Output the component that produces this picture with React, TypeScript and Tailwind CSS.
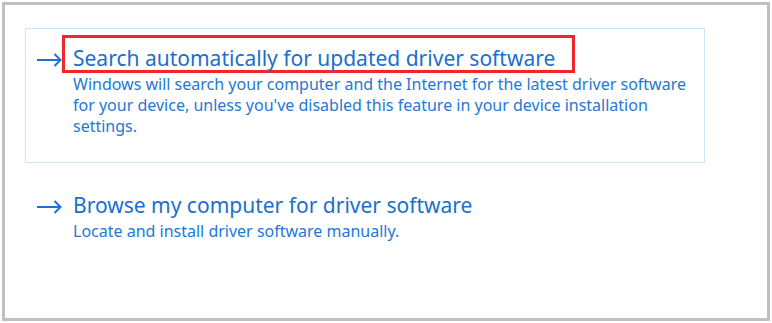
const options = [
  {
    title: 'Search automatically for updated driver software',
    desc: "Windows will search your computer and the Internet for the latest driver software for your device, unless you've disabled this feature in your device installation settings.",
    highlighted: true,
  },
  {
    title: 'Browse my computer for driver software',
    desc: 'Locate and install driver software manually.',
    highlighted: false,
  },
]

function Arrow() {
  return (
    <svg width="26" height="14" viewBox="0 0 26 14" fill="none" className="mt-[18px] shrink-0">
      <path d="M1 7H24.5M18.5 1L24.5 7L18.5 13" stroke="#1a73d0" strokeWidth="2" />
    </svg>
  )
}

export default function App() {
  return (
    <div className="w-[772px] h-[323px] bg-white p-[2px] font-['Noto_Sans',sans-serif]">
      <div className="h-full border-[3px] border-[#c0c0c0] pl-[20px] pt-[23px]">
        {options.map((opt, i) => (
          <div
            key={opt.title}
            className={
              'w-[680px] border pl-[10px] pt-[6px] flex ' +
              (opt.highlighted ? 'h-[135px] border-[#cce4f7]' : 'border-transparent mt-[12px]')
            }
          >
            <Arrow />
            <div className="flex flex-col">
              <div
                className={
                  'h-[38px] border-[3px] pl-[8px] pt-[7px] text-[21px] leading-[26px] whitespace-nowrap text-[#1a6fce] ' +
                  (i === 0 ? 'w-[513px] border-[#f0262b]' : 'border-transparent')
                }
              >
                {opt.title}
              </div>
              <p className="mt-[1px] pl-[11px] w-[633px] text-[16px] leading-[21px] text-[#2378d6]">
                {opt.desc}
              </p>
            </div>
          </div>
        ))}
      </div>
    </div>
  )
}
